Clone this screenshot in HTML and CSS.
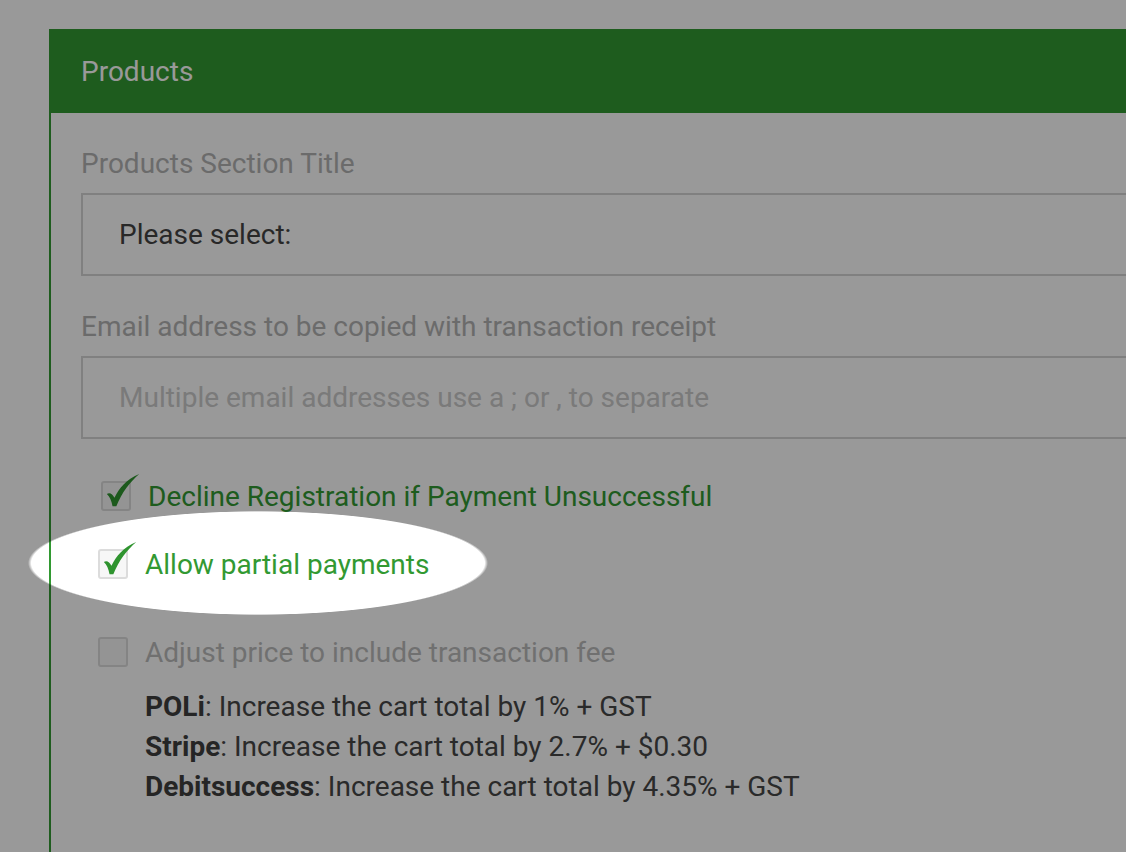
FILE: index.html
```html
<!DOCTYPE html>
<html lang="en">
<head>
<meta charset="utf-8">
<title>Products</title>
<link rel="stylesheet" href="styles.css">
</head>
<body>
<div class="page">
  <section class="panel">
    <header class="panel-head">Products</header>
    <div class="panel-body">
      <div class="field">
        <label class="field-label">Products Section Title</label>
        <div class="input select">Please select:</div>
      </div>
      <div class="field">
        <label class="field-label">Email address to be copied with transaction receipt</label>
        <div class="input placeholder">Multiple email addresses use a ; or , to separate</div>
      </div>
      <div class="checks">
        <div class="check-row checked first">
          <span class="box"><svg class="tick" viewBox="0 0 40 40"><path d="M3 21 C6 19 9 21 11 25 C16 15 23 6 37 0 C27 9 19 19 13 34 C11 34 10 34 9 34 C8 28 6 24 3 21 Z"/></svg></span>
          <span class="check-label">Decline Registration if Payment Unsuccessful</span>
        </div>
        <div class="check-row checked">
          <span class="box"><svg class="tick" viewBox="0 0 40 40"><path d="M3 21 C6 19 9 21 11 25 C16 15 23 6 37 0 C27 9 19 19 13 34 C11 34 10 34 9 34 C8 28 6 24 3 21 Z"/></svg></span>
          <span class="check-label">Allow partial payments</span>
        </div>
        <div class="check-row adjust">
          <span class="box"></span>
          <span class="check-label muted">Adjust price to include transaction fee</span>
        </div>
      </div>
      <div class="fees">
        <p><b>POLi</b>: Increase the cart total by 1% + GST</p>
        <p><b>Stripe</b>: Increase the cart total by 2.7% + $0.30</p>
        <p><b>Debitsuccess</b>: Increase the cart total by 4.35% + GST</p>
      </div>
    </div>
  </section>
</div>
<div class="spotlight"></div>
</body>
</html>
```
FILE: styles.css
```css
html, body {
  margin: 0;
  padding: 0;
  background: #fff;
  overflow: hidden;
  height: 852px;
  font-family: Roboto, "Liberation Sans", sans-serif;
}
.page {
  padding: 29px 0 0 49px;
}
.panel {
  width: 1077px;
  border-left: 2px solid #329932;
  height: 823px;
}
.panel-head {
  background: #329932;
  color: #fff;
  height: 84px;
  display: flex;
  align-items: center;
  padding-left: 30px;
  font-size: 28px;
}
.panel-body {
  padding: 31px 0 0 30px;
}
.field {
  display: flex;
  flex-direction: column;
  margin-bottom: 31px;
}
.field-label {
  color: #b3b3b3;
  font-size: 28px;
  line-height: 40px;
  margin-bottom: 9px;
}
.input {
  height: 79px;
  border: 2px solid #d6d6d6;
  border-right: 0;
  display: flex;
  align-items: center;
  padding-left: 36px;
  font-size: 28px;
}
.select { color: #444; }
.placeholder { color: #cbcbcb; }
.checks {
  display: flex;
  flex-direction: column;
  padding-left: 17px;
  margin-top: -8px;
}
.check-row {
  display: flex;
  align-items: center;
  gap: 17px;
  height: 68px;
}
.check-row.adjust { height: 108px; }
.check-row.first { padding-left: 3px; }
.box {
  position: relative;
  width: 26px;
  height: 26px;
  border: 2px solid #dcdcdc;
  border-radius: 3px;
  background: #f7f7f7;
  flex: none;
}
.tick {
  position: absolute;
  left: 1px;
  top: -9px;
  width: 38px;
  height: 38px;
  fill: #2f942f;
}
.check-label {
  font-size: 28px;
  color: #329932;
}
.check-label.muted { color: #bbb; }
.fees {
  padding-left: 64px;
  margin-top: -19px;
}
.fees p {
  margin: 0;
  font-size: 28px;
  line-height: 40px;
  color: #474747;
}
.fees b { color: #3f3f3f; }
.spotlight {
  position: fixed;
  inset: 0;
  pointer-events: none;
  background: radial-gradient(ellipse 230px 52px at 258px 563px, rgba(0,0,0,0) 98.5%, rgba(0,0,0,0.4) 100%);
}
```
